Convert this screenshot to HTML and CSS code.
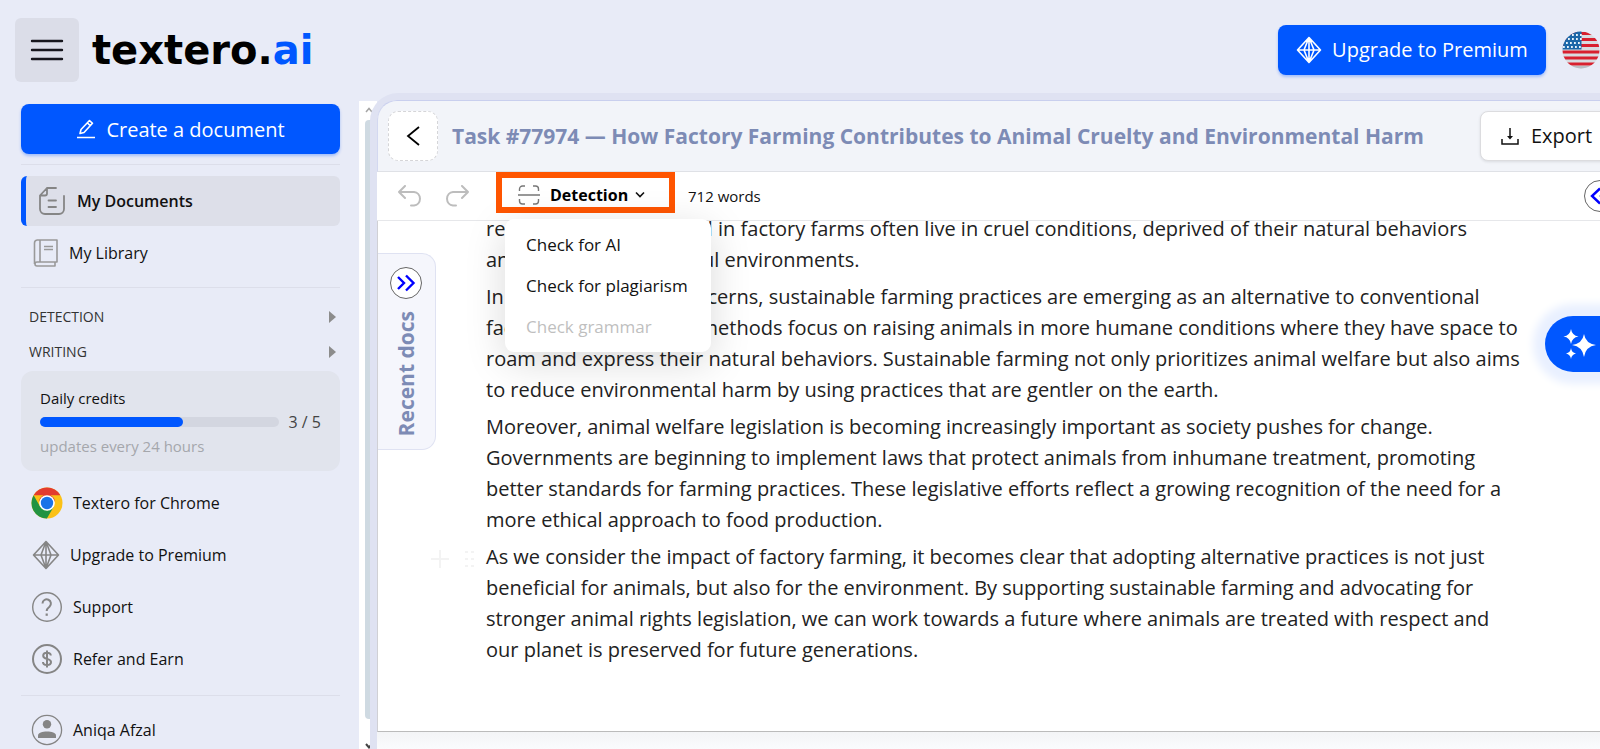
FILE: index.html
```
<!DOCTYPE html>
<html lang="en">

<head>
    <meta charset="UTF-8">
    <meta name="viewport" content="width=device-width, initial-scale=1.0">
    <title>How Factory Farming Contributes to Animal Cruelty | textero.ai</title>
    <link rel="stylesheet" href="styles.css">
</head>

<body>
    <!-- Header -->
    <header class="navbar">
        <button class="menu-btn" aria-label="Menu">
            <svg width="34" height="22" viewBox="0 0 34 22" fill="none" stroke="#16161d" stroke-width="2.4" stroke-linecap="round">
                <path d="M2 2h30M2 11h30M2 20h30" />
            </svg>
        </button>
        <a href="#" class="logo">textero.<span>ai</span></a>
        <button class="btn-primary premium-btn">
            <svg width="26" height="28" viewBox="0 0 26 28" fill="none" stroke="#fff" stroke-width="1.6" stroke-linejoin="round">
                <path d="M13 1.500L24.500 14 13 26.500 1.500 14zM1.500 14h23M13 1.500L8 14l5 12.500L18 14zM13 1.500v25" />
            </svg>
            Upgrade to Premium
        </button>
        <button class="lang-btn" aria-label="Language">
            <svg width="38" height="38" viewBox="0 0 38 38">
                <clipPath id="flagClip"><circle cx="19" cy="19" r="18.500" /></clipPath>
                <g clip-path="url(#flagClip)">
                    <rect width="38" height="38" fill="#d8dce1" />
                    <path d="M0 2.500h38M0 8.500h38M0 14.500h38M0 21h38M0 27h38M0 33h38" stroke="#d8202f" stroke-width="3.200" />
                    <path d="M0 36.500h38" stroke="#b9bdc3" stroke-width="3" />
                    <rect width="19.500" height="18.500" fill="#1c67a8" />
                    <path d="M6 4h14M2 8h18M4 12h16M1 16h19" stroke="#e8f3fb" stroke-width="1.800" stroke-dasharray="1.800 2.200" />
                </g>
            </svg>
        </button>
    </header>

    <div class="layout">
        <!-- Sidebar -->
        <nav class="sidebar">
            <button class="btn-primary create-btn">
                <svg width="20" height="20" viewBox="0 0 20 20" fill="none" stroke="#fff" stroke-width="1.600" stroke-linejoin="round">
                    <path d="M1 18.500h18M4 14.500l1-4L13.500 1.500l3 2.800L8 13.500zM11.500 4l3 2.800" />
                </svg>
                Create a document
            </button>

            <div class="nav-group">
                <a href="#" class="nav-item active">
                    <svg width="26" height="28" viewBox="0 0 26 28" fill="none" stroke="#858585" stroke-width="1.800" stroke-linecap="round" stroke-linejoin="round">
                        <path d="M17 1H8L1 8.500V22a5 5 0 0 0 5 5h14a5 5 0 0 0 5-5V9M8 1v5.500a2 2 0 0 1-2 2H1M9.500 13.500H17M9.500 20H17" />
                    </svg>
                    My Documents
                </a>
                <a href="#" class="nav-item">
                    <svg width="26" height="28" viewBox="0 0 26 28" fill="none" stroke="#999" stroke-width="1.600" stroke-linejoin="round">
                        <path d="M4 1h20v22H4a2 2 0 0 0 0 4h18v-4M1.500 25V4A3 3 0 0 1 4 1M7 1v22M11 7.500h9M11 10.500h9" />
                    </svg>
                    My Library
                </a>
            </div>

            <div class="nav-group sections">
                <button class="section-btn">DETECTION <span class="arrow"></span></button>
                <button class="section-btn">WRITING <span class="arrow"></span></button>
            </div>

            <div class="credits">
                <div class="credits-title">Daily credits</div>
                <div class="credits-row">
                    <div class="credits-bar">
                        <div class="credits-fill" style="width: 60%"></div>
                    </div>
                    <span>3 / 5</span>
                </div>
                <div class="credits-note">updates every 24 hours</div>
            </div>

            <div class="side-links">
                <a href="#" class="side-link">
                    <svg width="32" height="32" viewBox="0 0 32 32">
                        <circle cx="16" cy="16" r="15.500" fill="#fbc116" />
                        <path d="M2.600 8.200A15.500 15.500 0 0 1 29.400 8.200H16z" fill="#e33b2e" />
                        <path d="M2.600 8.200L9.200 19.800 16 23.500 15.900 31.500A15.500 15.500 0 0 1 2.600 8.200z" fill="#229342" />
                        <path d="M9.200 19.800L16 23.800l6.700-4L15.900 31.500z" fill="#229342" />
                        <circle cx="16" cy="16" r="8.400" fill="#e33b2e" clip-path="inset(0 0 60% 0)" />
                        <circle cx="16" cy="16" r="7.800" fill="#fff" />
                        <circle cx="16" cy="16" r="6.200" fill="#1a73e8" />
                    </svg>
                    Textero for Chrome
                </a>
                <a href="#" class="side-link diamond">
                    <svg width="28" height="30" viewBox="0 0 28 30" fill="none" stroke="#858585" stroke-width="1.600" stroke-linejoin="round">
                        <path d="M14 1.500L26.500 15 14 28.500 1.500 15zM1.500 15h25M14 1.500L9 15l5 13.500L19 15zM14 1.500v27" />
                    </svg>
                    Upgrade to Premium
                </a>
                <a href="#" class="side-link">
                    <svg width="32" height="32" viewBox="0 0 32 32" fill="none" stroke="#858585">
                        <circle cx="16" cy="16" r="14.300" stroke-width="1.400" />
                        <path d="M11.500 12.500a4.200 4.200 0 1 1 7 3.200c-1.800 1.500-2.800 2-2.800 4.300" stroke-width="2" />
                        <path d="M15.700 22.500v2.300" stroke-width="2.200" />
                    </svg>
                    Support
                </a>
                <a href="#" class="side-link">
                    <svg width="32" height="32" viewBox="0 0 32 32" fill="none" stroke="#858585" stroke-width="2">
                        <circle cx="16" cy="16" r="14" />
                        <path d="M19.800 12.500c0-4-7.600-3.600-7.600.2 0 4.400 7.800 2 7.800 6.400 0 4-8 4-8 0M16 7.500v17" />
                    </svg>
                    Refer and Earn
                </a>
            </div>

            <div class="nav-group account">
                <a href="#" class="side-link">
                    <svg width="32" height="32" viewBox="0 0 32 32" fill="#858585">
                        <circle cx="16" cy="16" r="14.600" fill="none" stroke="#858585" stroke-width="1.300" />
                        <circle cx="16" cy="10.200" r="4.200" />
                        <path d="M7 24v-2.500c0-5.300 18-5.300 18 0V24z" />
                    </svg>
                    Aniqa Afzal
                </a>
            </div>
        </nav>

        <div class="scroll-strip">
            <svg width="8" height="6" viewBox="0 0 8 6" fill="none" stroke="#a5a5a5" stroke-width="1.500"><path d="M1 5l3-3.500L7 5" /></svg>
            <div class="scroll-thumb"></div>
            <svg width="8" height="6" viewBox="0 0 8 6" fill="none" stroke="#444" stroke-width="2"><path d="M1 1l3 3.500L7 1" /></svg>
        </div>

        <!-- Document -->
        <main class="panel">
            <div class="panel-header">
                <button class="back-btn" aria-label="Back">
                    <svg width="14" height="20" viewBox="0 0 14 20" fill="none" stroke="#000" stroke-width="1.800"><path d="M13 1L2 10l11 9" /></svg>
                </button>
                <h1>Task #77974 — How Factory Farming Contributes to Animal Cruelty and Environmental Harm</h1>
                <button class="export-btn">
                    <svg width="18" height="18" viewBox="0 0 18 18" fill="none" stroke="#111" stroke-width="1.500">
                        <path d="M1 12v5h16v-5M9 1v10" /><path d="M6 9h6l-3 3.500z" fill="#111" stroke="none" />
                    </svg>
                    Export
                </button>
            </div>

            <div class="toolbar">
                <button class="icon-btn" aria-label="Undo">
                    <svg width="24" height="22" viewBox="0 0 24 22" fill="none" stroke="#bdbdbd" stroke-width="2" stroke-linecap="round" stroke-linejoin="round">
                        <path d="M7 1L1 7l6 6M1 7h15a6.800 6.800 0 0 1 0 13.500h-3" />
                    </svg>
                </button>
                <button class="icon-btn" aria-label="Redo">
                    <svg width="24" height="22" viewBox="0 0 24 22" fill="none" stroke="#bdbdbd" stroke-width="2" stroke-linecap="round" stroke-linejoin="round">
                        <path d="M17 1l6 6-6 6M23 7H8a6.800 6.800 0 0 0 0 13.500h3" />
                    </svg>
                </button>
                <div class="detection">
                    <button class="detection-btn">
                        <svg width="22" height="20" viewBox="0 0 22 20" fill="none" stroke="#777" stroke-width="1.400">
                            <path d="M0 10h22M1.500 6V4a3 3 0 0 1 3-3H7M15 1h2.500a3 3 0 0 1 3 3v2M1.500 14v2a3 3 0 0 0 3 3H7M15 19h2.500a3 3 0 0 0 3-3v-2" />
                        </svg>
                        <span>Detection</span>
                        <svg class="caret" width="10" height="8" viewBox="0 0 10 8" fill="none" stroke="#111" stroke-width="1.600"><path d="M1 1.500l4 4 4-4" /></svg>
                    </button>
                    <div class="dropdown">
                        <button>Check for AI</button>
                        <button>Check for plagiarism</button>
                        <button disabled>Check grammar</button>
                    </div>
                </div>
                <span class="word-count">712 words</span>
                <button class="round-btn collapse-btn" aria-label="Open panel">
                    <svg width="20" height="18" viewBox="0 0 20 18" fill="none" stroke="#00f" stroke-width="2.400"><path d="M10 1.500L2 9l8 7.500M18 2l-7 7 7 7" /></svg>
                </button>
            </div>

            <div class="editor">
                <aside class="recent-docs">
                    <button class="round-btn" aria-label="Show recent docs">
                        <svg width="20" height="18" viewBox="0 0 20 18" fill="none" stroke="#00f" stroke-width="2.400"><path d="M2 3l6 6-6 6M10 1.500L17.500 9 10 16.500" /></svg>
                    </button>
                    <span>Recent docs</span>
                </aside>
                <article class="text">
                    <p>research, animals raised in factory farms often live in cruel conditions, deprived of their natural behaviors<br>
                        and kept in very stressful environments.</p>
                    <p>In response to such concerns, sustainable farming practices are emerging as an alternative to conventional<br>
                        factory farming. These methods focus on raising animals in more humane conditions where they have space to<br>
                        roam and express their natural behaviors. Sustainable farming not only prioritizes animal welfare but also aims<br>
                        to reduce environmental harm by using practices that are gentler on the earth.</p>
                    <p>Moreover, animal welfare legislation is becoming increasingly important as society pushes for change.<br>
                        Governments are beginning to implement laws that protect animals from inhumane treatment, promoting<br>
                        better standards for farming practices. These legislative efforts reflect a growing recognition of the need for a<br>
                        more ethical approach to food production.</p>
                    <p class="current">
                        <svg class="handle" width="46" height="20" viewBox="0 0 46 20" fill="none" stroke="#f3f3f3" stroke-width="2">
                            <path d="M1 10h18M10 1v18M35 3h3M41 3h3M35 10h3M41 10h3M35 17h3M41 17h3" />
                        </svg>
                        As we consider the impact of factory farming, it becomes clear that adopting alternative practices is not just<br>
                        beneficial for animals, but also for the environment. By supporting sustainable farming and advocating for<br>
                        stronger animal rights legislation, we can work towards a future where animals are treated with respect and<br>
                        our planet is preserved for future generations.</p>
                </article>
            </div>
            <div class="panel-footer"></div>

            <button class="ai-btn" aria-label="AI assistant">
                <svg width="34" height="32" viewBox="0 0 34 32" fill="#fff">
                    <path d="M21 6Q22.500 15.500 33 17 22.500 18.500 21 29 19.500 18.500 9 17 19.500 15.500 21 6z" />
                    <path d="M8 1Q9 7.500 15.500 8.500 9 9.500 8 16 7 9.500.500 8.500 7 7.500 8 1z" />
                    <path d="M8 20Q8.500 24.500 13 25.500 8.500 26.500 8 31 7.500 26.500 3 25.500 7.500 24.500 8 20z" />
                </svg>
            </button>
        </main>
    </div>
</body>

</html>
```
FILE: styles.css
```
* {
    box-sizing: border-box;
}

body {
    font-family: "Open Sans", "Noto Sans", sans-serif;
    margin: 0;
    background-color: #e8ebf7;
    color: #111;
    display: flex;
    flex-direction: column;
    height: 100vh;
    overflow: hidden;
}

button {
    font-family: inherit;
    color: inherit;
    background: none;
    border: none;
    padding: 0;
    cursor: pointer;
}

a {
    color: inherit;
    text-decoration: none;
}

svg {
    flex-shrink: 0;
}

/* Header */
.navbar {
    display: flex;
    align-items: center;
    flex-shrink: 0;
    height: 101px;
    padding: 0 0 2px 15px;
}

.menu-btn {
    display: flex;
    align-items: center;
    justify-content: center;
    width: 64px;
    height: 64px;
    border-radius: 6px;
    background-color: #dbdde8;
}

.logo {
    font-family: "DejaVu Sans", sans-serif;
    font-size: 40px;
    font-weight: bold;
    line-height: 40px;
    color: #000;
    margin-left: 13px;
}

.logo span {
    color: #0057ff;
}

.btn-primary {
    display: flex;
    align-items: center;
    justify-content: center;
    height: 50px;
    border-radius: 8px;
    background-color: #0057ff;
    box-shadow: 0 2px 3px rgba(0, 87, 255, 0.3);
    color: #fff;
    font-size: 20px;
    font-weight: 500;
    white-space: nowrap;
}

.premium-btn {
    width: 268px;
    gap: 10px;
    margin-left: auto;
}

.lang-btn {
    display: flex;
    margin-left: 16px;
}

.layout {
    display: flex;
    flex: 1;
    min-height: 0;
}

/* Sidebar */
.sidebar {
    width: 359px;
    flex-shrink: 0;
    padding: 3px 19px 0 21px;
    font-size: 16px;
}

.create-btn {
    width: 100%;
    gap: 10px;
    margin-bottom: 10px;
}

.nav-group {
    border-top: 1px solid #dcdeea;
    padding-top: 11px;
}

.nav-item {
    display: flex;
    align-items: center;
    height: 50px;
    gap: 10px;
    padding-left: 12px;
    border-radius: 6px;
}

.nav-item.active {
    background-color: #dddfe9;
    border-left: 5px solid #0057ff;
    gap: 12px;
    padding-left: 13px;
    font-weight: 600;
    margin-bottom: 2px;
}

.sections {
    margin-top: 9px;
    padding-bottom: 2px;
}

.section-btn {
    display: flex;
    align-items: center;
    justify-content: space-between;
    width: 100%;
    height: 35px;
    padding: 0 4px 0 8px;
    font-size: 14px;
    color: #333;
}

.arrow {
    border-left: 7px solid #8c8c8c;
    border-top: 6px solid transparent;
    border-bottom: 6px solid transparent;
}

.credits {
    height: 100px;
    padding: 15px 19px 0;
    border-radius: 12px;
    background-color: #e1e4ed;
    font-size: 15px;
}

.credits-title,
.credits-note {
    line-height: 24px;
}

.credits-note {
    color: #a5a7ac;
}

.credits-row {
    display: flex;
    align-items: center;
    gap: 10px;
    height: 24px;
    font-size: 16px;
    color: #444;
    white-space: nowrap;
}

.credits-bar {
    flex: 1;
    height: 10px;
    border-radius: 5px;
    background-color: #d3d6e0;
}

.credits-fill {
    height: 100%;
    border-radius: 5px;
    background-color: #0057ff;
}

.side-links {
    padding: 6px 0 10px;
}

.side-link {
    display: flex;
    align-items: center;
    gap: 10px;
    height: 52px;
    padding-left: 10px;
}

.side-link.diamond {
    padding-left: 11px;
}

.account {
    padding-top: 8px;
}

.scroll-strip {
    display: flex;
    flex-direction: column;
    width: 18px;
    flex-shrink: 0;
    padding: 6px 0 0 6px;
    background-color: #fff;
}

.scroll-thumb {
    flex: 1;
    width: 12px;
    margin: 7px 0 24px;
    border-radius: 4px;
    background-color: #cfdae2;
}

/* Document panel */
.panel {
    display: flex;
    flex-direction: column;
    flex: 1;
    min-width: 0;
    position: relative;
    margin: -8px 0 0 -7px;
    border-left: 7px solid #dfe2f2;
    border-top: 7px solid #dfe2f2;
    border-top-left-radius: 28px;
    background-color: #fff;
}

.panel-header {
    display: flex;
    align-items: center;
    flex-shrink: 0;
    height: 72px;
    padding: 0 0 1px 10px;
    background-color: #f2f4f9;
    border-top: 1px solid #c9cfee;
    border-left: 1px solid #d3d8f0;
    border-bottom: 1px solid #dfe1e6;
    border-top-left-radius: 20px;
}

.back-btn {
    display: flex;
    align-items: center;
    justify-content: center;
    width: 50px;
    height: 50px;
    flex-shrink: 0;
    background-color: #fff;
    border: 1px dashed #d5d5d8;
    border-radius: 10px;
}

.panel-header h1 {
    flex: 1;
    margin: 0 0 0 14px;
    font-size: 21px;
    font-weight: bold;
    color: #7d8bb5;
    white-space: nowrap;
}

.export-btn {
    display: flex;
    align-items: center;
    gap: 12px;
    width: 134px;
    height: 50px;
    padding-left: 20px;
    margin-right: -14px;
    flex-shrink: 0;
    background-color: #fff;
    border: 1px solid #dcdcdf;
    border-radius: 8px;
    box-shadow: 0 1px 3px rgba(0, 0, 0, 0.1);
    font-size: 20px;
}

.toolbar {
    display: flex;
    align-items: center;
    flex-shrink: 0;
    height: 49px;
    padding-left: 21px;
    border-bottom: 1px solid #e6e7ea;
}

.icon-btn {
    display: flex;
    margin-right: 23px;
}

.detection {
    position: relative;
    align-self: flex-start;
    margin-left: 4px;
}

.detection-btn {
    display: flex;
    align-items: center;
    gap: 10px;
    width: 179px;
    height: 41px;
    padding: 4px 0 0 16px;
    border: 6px solid #ff5500;
    font-size: 16px;
    font-weight: bold;
    color: #000;
}

.detection-btn .caret {
    margin-left: -3px;
}

.dropdown {
    position: absolute;
    top: 47px;
    left: 9px;
    z-index: 10;
    width: 206px;
    padding: 5px 0 5px;
    background-color: #fff;
    border-radius: 9px;
    box-shadow: 0 10px 40px rgba(0, 0, 0, 0.15);
}

.dropdown button {
    display: block;
    width: 100%;
    height: 41px;
    padding-left: 21px;
    text-align: left;
    white-space: nowrap;
    font-size: 17px;
}

.dropdown button:disabled {
    color: #bfbfbf;
}

.word-count {
    margin-left: 13px;
    font-size: 15px;
}

.round-btn {
    display: flex;
    align-items: center;
    justify-content: center;
    width: 32px;
    height: 32px;
    flex-shrink: 0;
    background-color: #fff;
    border: 1px solid #666;
    border-radius: 50%;
}

.collapse-btn {
    margin-left: auto;
    margin-right: -16px;
}

.editor {
    display: flex;
    align-items: flex-start;
    flex: 1;
    min-height: 0;
    border-bottom: 1px solid #bbb;
    border-left: 1px solid #d0d0d5;
    overflow: hidden;
}

.recent-docs {
    display: flex;
    flex-direction: column;
    align-items: center;
    gap: 12px;
    width: 58px;
    height: 197px;
    margin-top: 32px;
    padding-top: 13px;
    padding-right: 2px;
    flex-shrink: 0;
    background-color: #f5f6fc;
    border: 1px solid #dfe2f2;
    border-left: none;
    border-radius: 0 14px 14px 0;
}

.recent-docs span {
    writing-mode: vertical-rl;
    transform: rotate(180deg);
    font-size: 21px;
    line-height: 28px;
    font-weight: bold;
    color: #7d8bb5;
    white-space: nowrap;
}

.text {
    margin-left: 50px;
    margin-top: -8px;
    font-size: 20px;
    line-height: 31px;
    color: #222;
    white-space: nowrap;
}

.text p {
    margin: 0 0 6px;
}

.text .current {
    position: relative;
}

/* Block handle shown beside the current paragraph */
.handle {
    position: absolute;
    left: -56px;
    top: 8px;
}

.panel-footer {
    height: 17px;
    flex-shrink: 0;
    background: linear-gradient(#f3f4f6, #fafbfd);
}

/* Floating assistant button */
.ai-btn {
    position: absolute;
    right: 0;
    top: 216px;
    display: flex;
    align-items: center;
    width: 55px;
    height: 56px;
    padding-left: 18px;
    background-color: #0057ff;
    border-radius: 28px 0 0 28px;
    box-shadow: 0 0 8px 12px #e9f0ff;
}
```
